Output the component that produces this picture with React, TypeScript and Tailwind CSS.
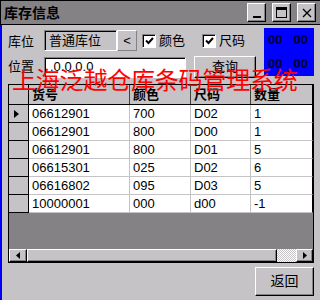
import React from "react";

const rows = [
  ["06612901", "700", "D02", "1"],
  ["06612901", "800", "D00", "1"],
  ["06612901", "800", "D01", "5"],
  ["06615301", "025", "D02", "6"],
  ["06616802", "095", "D03", "5"],
  ["10000001", "000", "d00", "-1"],
];

const raised =
  "border border-t-white border-l-white border-r-[#000] border-b-[#000] shadow-[inset_-1px_-1px_0_#848284]";
const sunken =
  "border border-t-[#848284] border-l-[#848284] border-r-white border-b-white shadow-[inset_1px_1px_0_#000]";

function Check({ label }: { label: string }) {
  return (
    <div className="flex items-center gap-[3px]">
      <div className={`flex h-[14px] w-[14px] items-center justify-center bg-white ${sunken}`}>
        <svg width="9" height="8" viewBox="0 0 9 8">
          <path d="M1 3.5 L3.5 6 L8 1" stroke="#000" strokeWidth="2" fill="none" />
        </svg>
      </div>
      <span>{label}</span>
    </div>
  );
}

function TitleButton({ children }: { children: React.ReactNode }) {
  return (
    <div className={`flex h-[19px] w-[19px] items-center justify-center bg-[#c6c3c6] ${raised}`}>
      {children}
    </div>
  );
}

export default function App() {
  return (
    <div
      className="relative h-[300px] w-[320px] overflow-hidden bg-[#c6c3c6] text-[13px] text-black"
      style={{ fontFamily: '"Liberation Sans", "Noto Sans CJK SC", sans-serif' }}
    >
      <div className="flex h-[25px] items-center border-t border-b border-l border-black bg-[#848284] pl-[3px] pr-[4px]">
        <span className="text-[14px] font-bold" style={{ fontFamily: '"Noto Sans CJK SC", sans-serif' }}>
          库存信息
        </span>
        <div className="ml-auto flex gap-[6px]">
          <TitleButton>
            <div className="mt-[8px] h-[2px] w-[8px] bg-black" />
          </TitleButton>
          <TitleButton>
            <div className="h-[11px] w-[11px] border border-t-[3px] border-black" />
          </TitleButton>
          <TitleButton>
            <svg width="10" height="10" viewBox="0 0 10 10">
              <path d="M1 1 L9 9 M9 1 L1 9" stroke="#000" strokeWidth="1.3" />
            </svg>
          </TitleButton>
        </div>
      </div>

      <div className="flex h-[275px] flex-col border-l-2 border-[#0000f8] pl-[6px] pr-[6px]">
        <div className="mt-[3px] flex">
          <div className="flex flex-col gap-[5px] pt-[2px]">
            <div className="flex h-[21px] items-center">
              <span className="w-[36px]" style={{ fontFamily: '"Noto Sans CJK SC", sans-serif' }}>库位</span>
              <div className={`flex h-[21px] w-[73px] items-center pl-[4px] ${sunken}`}>普通库位</div>
              <div className="flex h-[21px] w-[20px] items-center justify-center border border-t-white border-l-white border-r-[#848284] border-b-[#848284]">
                &lt;
              </div>
              <div className="ml-[5px] flex gap-[17px]">
                <Check label="颜色" />
                <Check label="尺码" />
              </div>
            </div>
            <div className="flex h-[22px] items-center">
              <span className="w-[36px]">位置</span>
              <div className={`flex h-[21px] w-[142px] items-center bg-white pl-[5px] ${sunken}`}>.0.0.0.0</div>
              <div className={`ml-[8px] flex h-[22px] w-[62px] items-center justify-center bg-[#c6c3c6] ${raised}`}>
                查询
              </div>
            </div>
          </div>
          <div className="ml-auto flex h-[48px] w-[50px] flex-col justify-around bg-[#0000ff] pl-[4px] pr-[6px] text-[13px] font-bold text-[#000030]">
            <div className="flex justify-between leading-[14px]">
              <span>00</span>
              <span>00</span>
            </div>
            <div className="flex justify-between leading-[14px]">
              <span>00</span>
              <span>00</span>
            </div>
          </div>
        </div>

        <div className="mt-[6px] flex h-[179px] w-[306px] flex-col border border-black bg-[#848284]">
          <div className="flex h-[20px] border-b border-black bg-[#c6c3c6] font-bold">
            <div className="w-[20px] border-r border-black" />
            <div className="w-[101px] border-r border-[#404040] pl-[3px] leading-[20px]">货号</div>
            <div className="w-[61px] border-r border-[#404040] pl-[3px] leading-[20px]">颜色</div>
            <div className="w-[60px] border-r border-[#404040] pl-[3px] leading-[20px]">尺码</div>
            <div className="flex-1 border-r border-black pl-[3px] leading-[20px]">数量</div>
          </div>
          {rows.map((r, i) => (
            <div key={i} className="flex h-[18px]">
              <div className="flex w-[20px] items-center border-r border-b border-black bg-[#c6c3c6] pl-[5px]">
                {i === 0 && (
                  <svg width="5" height="8" viewBox="0 0 5 8">
                    <path d="M0 0 L5 4 L0 8 Z" fill="#000" />
                  </svg>
                )}
              </div>
              <div className="w-[101px] border-r border-b border-[#c6c3c6] bg-white pl-[3px] leading-[17px]">{r[0]}</div>
              <div className="w-[61px] border-r border-b border-[#c6c3c6] bg-white pl-[3px] leading-[17px]">{r[1]}</div>
              <div className="w-[60px] border-r border-b border-[#c6c3c6] bg-white pl-[3px] leading-[17px]">{r[2]}</div>
              <div className="flex-1 border-r border-b border-r-black border-b-[#c6c3c6] bg-white pl-[3px] leading-[17px]">{r[3]}</div>
            </div>
          ))}
          <div className="flex-1" />
          <div className="flex h-[13px] bg-[#c6c3c6]">
            <div className={`flex w-[18px] items-center justify-center bg-[#c6c3c6] ${raised}`}>
              <svg width="4" height="7" viewBox="0 0 4 7">
                <path d="M4 0 L0 3.5 L4 7 Z" fill="#000" />
              </svg>
            </div>
            <div className={`w-[250px] bg-[#c6c3c6] ${raised}`} />
            <div
              className="flex-1"
              style={{
                backgroundImage:
                  "repeating-conic-gradient(#ffffff 0% 25%, #c6c3c6 0% 50%)",
                backgroundSize: "2px 2px",
              }}
            />
            <div className={`flex w-[17px] items-center justify-center bg-[#c6c3c6] ${raised}`}>
              <svg width="4" height="7" viewBox="0 0 4 7">
                <path d="M0 0 L4 3.5 L0 7 Z" fill="#000" />
              </svg>
            </div>
          </div>
        </div>

        <div className="mt-[4px] flex justify-end pr-[0px]">
          <div className={`flex h-[29px] w-[59px] items-center justify-center bg-[#c6c3c6] text-[14px] ${raised}`}>
            返回
          </div>
        </div>
      </div>

      <div
        className="absolute left-[12px] top-[64px] text-[24px] leading-[30px] tracking-[-0.2px] text-[#ff0000]"
        style={{ fontFamily: '"Noto Sans CJK SC", sans-serif' }}
      >
        上海泛越仓库条码管理系统
      </div>
    </div>
  );
}
